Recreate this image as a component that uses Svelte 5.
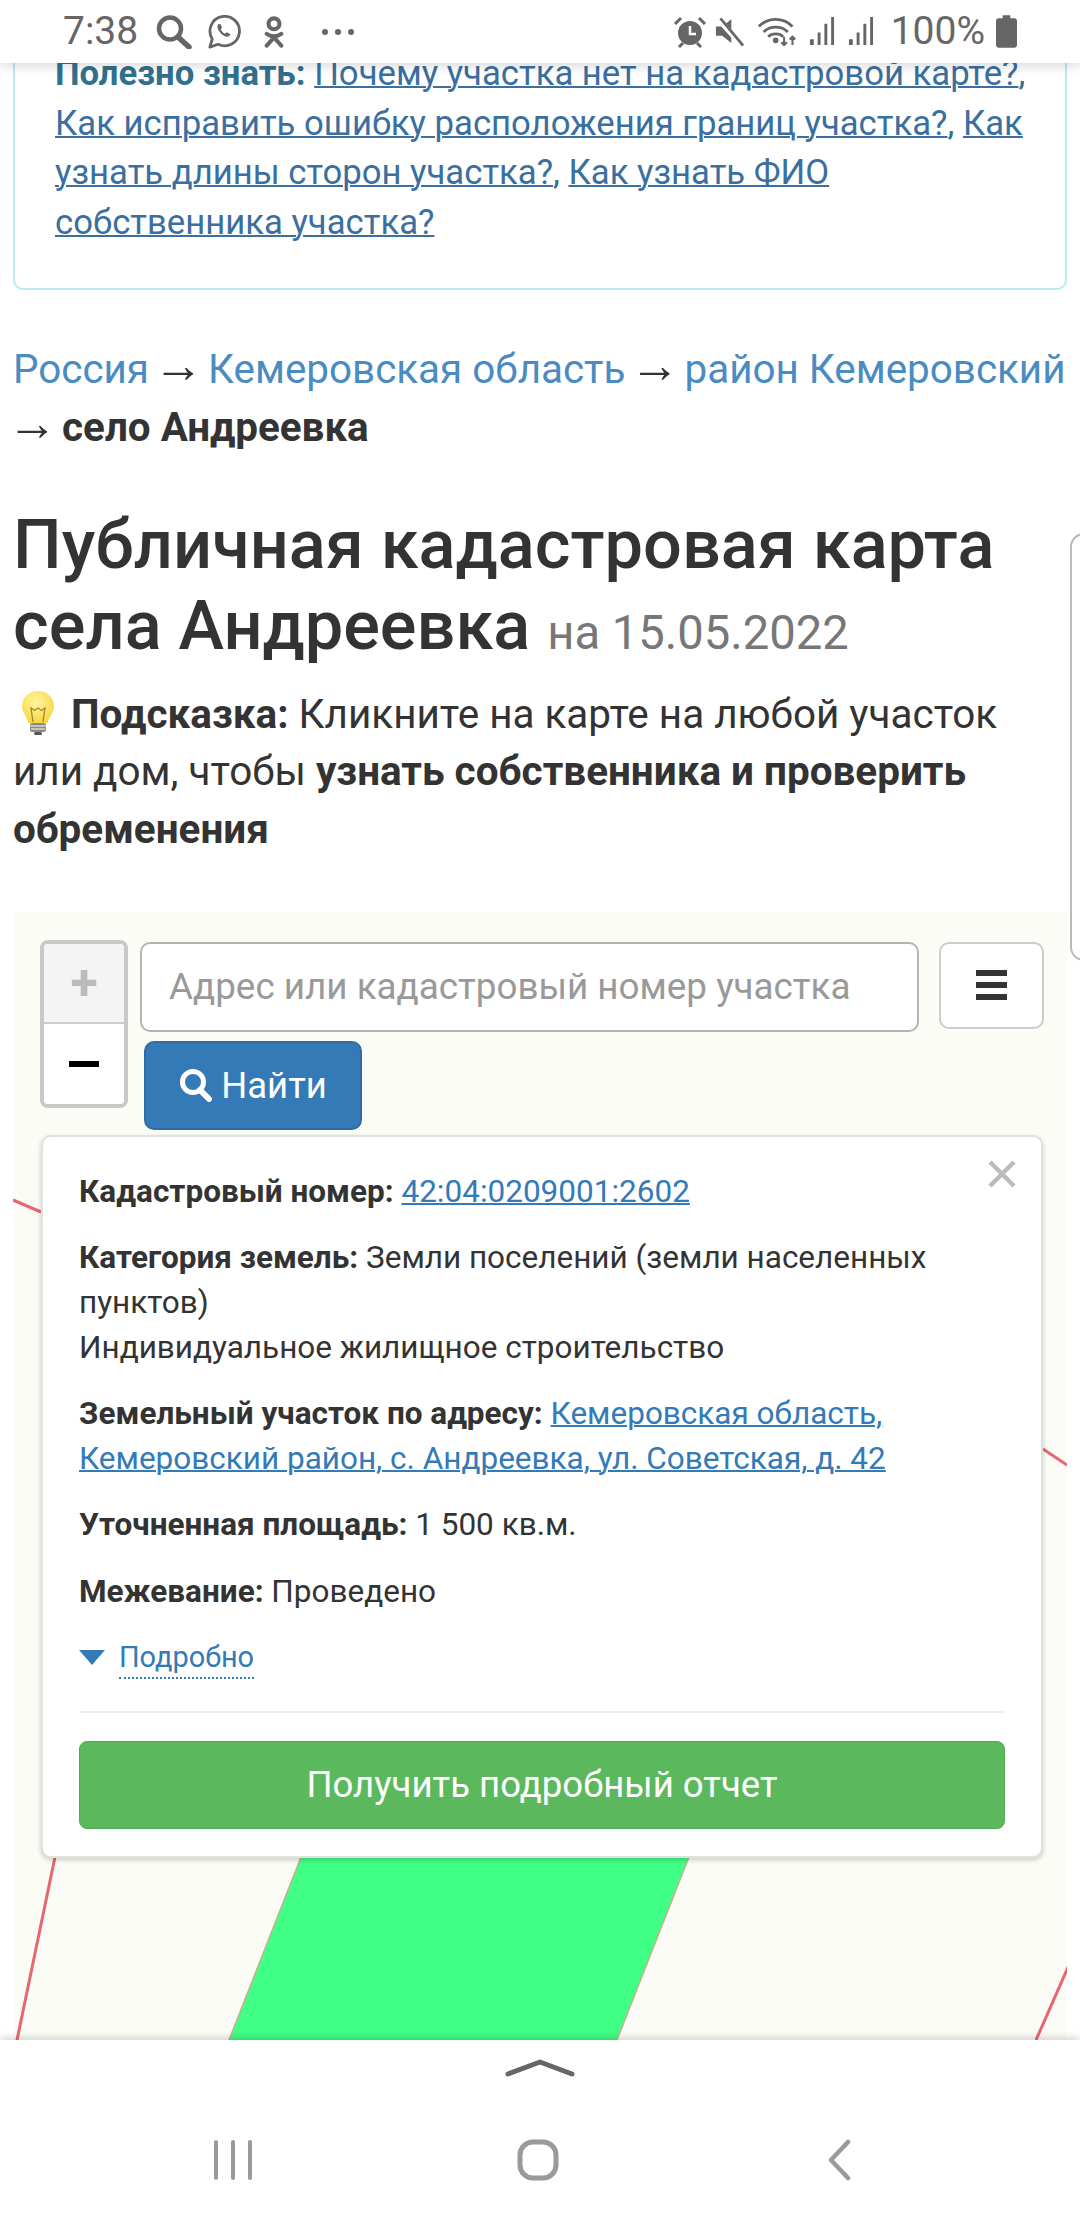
<script>
	const rows = [
		{ label: 'Уточненная площадь:', value: '1 500 кв.м.' },
		{ label: 'Межевание:', value: 'Проведено' }
	];
</script>

<div class="phone">
	<header class="status">
		<div class="status-left">
			<span class="time">7:38</span>
			<svg class="ic search-ic" width="36" height="34" viewBox="0 0 36 34">
				<circle cx="14" cy="13.500" r="11" fill="none" stroke="#666" stroke-width="4.500" />
				<path d="M22 22l11 10" stroke="#666" stroke-width="5.500" stroke-linecap="round" />
			</svg>
			<svg class="ic wa-ic" width="34" height="34" viewBox="0 0 36 36">
				<path d="M3 34l2.600-8.600A15.600 15.600 0 1 1 11.800 31z" fill="none" stroke="#666" stroke-width="3" stroke-linejoin="round" />
				<path d="M12.500 9.500c-2 1.500-2 4 0 7.200 2.200 3.500 5 5.600 8 6.300 2 .4 3.800-.8 4.300-2.600l-4-2.200-1.800 1.700c-2-.9-3.700-2.700-4.600-4.700l1.600-1.700-1.800-4z" fill="#666" />
			</svg>
			<svg class="ic ok-ic" width="20" height="32" viewBox="0 0 22 34">
				<circle cx="11" cy="8" r="6" fill="none" stroke="#666" stroke-width="4.500" />
				<path d="M3 19c5 3.500 11 3.500 16 0M11 22v2M3 32l8-9 8 9" fill="none" stroke="#666" stroke-width="4.500" stroke-linecap="round" />
			</svg>
			<span class="dots"><i></i><i></i><i></i></span>
		</div>
		<div class="status-right">
			<svg class="ic" width="34" height="32" viewBox="0 0 34 32">
				<circle cx="17" cy="17" r="12" fill="#666" />
				<path d="M17 10v8h6" fill="none" stroke="#fff" stroke-width="2.500" />
				<path d="M2 8l6-6M32 8l-6-6M6 31l4-4M28 31l-4-4" stroke="#666" stroke-width="3" />
			</svg>
			<svg class="ic mute-ic" width="29" height="32" viewBox="0 0 32 34">
				<path d="M1 11h7l10-8v26l-10-8H1z" fill="#666" />
				<path d="M3 2l26 29" stroke="#fff" stroke-width="6" />
				<path d="M6 2l25 30" stroke="#666" stroke-width="3" />
			</svg>
			<svg class="ic wifi-ic" width="41" height="32" viewBox="0 0 44 34">
				<path d="M1 11c10-10 26-10 36 0M6 17c7-7 19-7 26 0M11 22c4-4 12-4 16 0" fill="none" stroke="#666" stroke-width="3" />
				<circle cx="19" cy="26" r="3" fill="#666" />
				<path d="M28 22v9m-3-3l3 3 3-3M37 31v-9m-3 3l3-3 3 3" fill="none" stroke="#666" stroke-width="2.200" />
			</svg>
			<svg class="ic bars-ic" width="27" height="31" viewBox="0 0 28 32">
				<path d="M2 24h4v6H2zM10 17h3v13h-3zM17 8h3v22h-3zM24 1h3v29h-3z" fill="#666" />
			</svg>
			<svg class="ic bars2-ic" width="27" height="31" viewBox="0 0 28 32">
				<path d="M2 24h4v6H2zM10 17h3v13h-3zM17 8h3v22h-3zM24 1h3v29h-3z" fill="#666" />
			</svg>
			<span class="pct">100%</span>
			<svg class="ic batt-ic" width="21" height="33" viewBox="0 0 22 34">
				<path d="M7 0h8v3h4a3 3 0 0 1 3 3v25a3 3 0 0 1-3 3H3a3 3 0 0 1-3-3V6a3 3 0 0 1 3-3h4z" fill="#666" />
			</svg>
		</div>
	</header>

	<main class="page">
		<section class="alert">
			<strong>Полезно знать:</strong>
			<a href="#a">Почему участка нет на кадастровой карте?</a>,
			<a href="#a">Как исправить ошибку расположения границ участка?</a>,
			<a href="#a">Как узнать длины сторон участка?</a>,
			<a href="#a">Как узнать ФИО собственника участка?</a>
		</section>

		<nav class="crumbs">
			<a href="#a">Россия</a> <span class="arrow">→</span> <a href="#a">Кемеровская область</a> <span class="arrow">→</span> <a href="#a">район Кемеровский</a>
			<span class="arrow">→</span> <strong>село Андреевка</strong>
		</nav>

		<h1>Публичная кадастровая карта села Андреевка <small>на 15.05.2022</small></h1>

		<p class="hint">
			<svg class="bulb" width="34" height="46" viewBox="0 0 34 46">
				<defs>
					<radialGradient id="glass" cx="0.45" cy="0.35" r="0.7">
						<stop offset="0" stop-color="#fff6a0" />
						<stop offset="1" stop-color="#f7d43a" />
					</radialGradient>
				</defs>
				<path d="M17 1C7.500 1 1 8 1 16c0 7 5 10 6.500 17h19C28 26 33 23 33 16 33 8 26.500 1 17 1z" fill="url(#glass)" />
				<path d="M12 32l-2-14 3.500 2.500L17 18l3.500 2.500L24 18l-2 14" fill="none" stroke="#a08a30" stroke-width="1.300" />
				<rect x="9" y="33" width="16" height="9" rx="2" fill="#8a8a80" />
				<path d="M9 36h16M10 39h14" stroke="#d8d8d0" stroke-width="1.300" />
				<rect x="13" y="42" width="8" height="3" rx="1.500" fill="#555" />
			</svg>
			<strong>Подсказка:</strong> Кликните на карте на любой участок или дом, чтобы
			<strong>узнать собственника и проверить обременения</strong>
		</p>

		<div class="edge"></div>

		<section class="map">
			<svg class="parcels" width="1054" height="1128" viewBox="0 0 1054 1128">
				<path d="M288 945h388l-72 183H216z" fill="#40ff85" stroke="#c9b08c" stroke-width="1.500" />
				<path d="M0 288l28 12M1030 537l24 16M42 945L4 1128M1056 1053l-33 75" fill="none" stroke="#e8666e" stroke-width="3" />
			</svg>

			<div class="controls">
				<div class="left-col">
					<div class="zoom">
						<button class="zoom-in">+</button>
						<button class="zoom-out"><i></i></button>
					</div>
					<div class="layers"></div>
				</div>
				<div class="search">
					<div class="search-top">
						<input placeholder="Адрес или кадастровый номер участка" />
						<button class="menu" aria-label="Меню">
							<svg width="31" height="30" viewBox="0 0 31 30">
								<path d="M0 0h31v6H0zM0 12h31v6H0zM0 24h31v6H0z" fill="#333" />
							</svg>
						</button>
					</div>
					<button class="find">
						<svg width="34" height="34" viewBox="0 0 34 34">
							<circle cx="14" cy="14" r="10.500" fill="none" stroke="#fff" stroke-width="5" />
							<path d="M21 22l9 9" stroke="#fff" stroke-width="6" stroke-linecap="round" />
						</svg>
						Найти
					</button>
				</div>
			</div>

			<article class="popup">
				<svg class="close" width="30" height="30" viewBox="0 0 30 30">
					<path d="M3 3l24 24M27 3L3 27" stroke="#bbb" stroke-width="4.500" />
				</svg>
				<p><b>Кадастровый номер:</b> <a href="#a">42:04:0209001:2602</a></p>
				<p>
					<b>Категория земель:</b> Земли поселений (земли населенных пунктов)<br />
					Индивидуальное жилищное строительство
				</p>
				<p>
					<b>Земельный участок по адресу:</b>
					<a href="#a">Кемеровская область, Кемеровский район, с. Андреевка, ул. Советская, д. 42</a>
				</p>
				{#each rows as row}
					<p><b>{row.label}</b> {row.value}</p>
				{/each}
				<div class="more"><i></i><span>Подробно</span></div>
				<hr />
				<button class="report">Получить подробный отчет</button>
			</article>
		</section>
	</main>

	<footer class="nav">
		<svg class="chevron" width="70" height="20" viewBox="0 0 70 20">
			<path d="M3 16L35 4l32 12" fill="none" stroke="#666" stroke-width="5" stroke-linecap="round" stroke-linejoin="round" />
		</svg>
		<div class="nav-keys">
			<svg width="40" height="40" viewBox="0 0 40 40">
				<path d="M3 2v36M20 2v36M37 2v36" stroke="#9a9a9a" stroke-width="4" stroke-linecap="round" />
			</svg>
			<svg width="42" height="42" viewBox="0 0 42 42">
				<rect x="3" y="3" width="36" height="36" rx="13" fill="none" stroke="#9a9a9a" stroke-width="5" />
			</svg>
			<svg class="back" width="26" height="42" viewBox="0 0 26 42">
				<path d="M22 3L5 21l17 18" fill="none" stroke="#9a9a9a" stroke-width="4.500" stroke-linecap="round" stroke-linejoin="round" />
			</svg>
		</div>
	</footer>
</div>

<style>
	:global(body) {
		margin: 0;
		background: #fff;
	}

	.phone {
		width: 1080px;
		height: 2220px;
		display: flex;
		flex-direction: column;
		overflow: hidden;
		font-family: Roboto, 'Liberation Sans', sans-serif;
		color: #333;
		position: relative;
	}

	a {
		color: #337ab7;
		text-decoration-thickness: 2px;
	}

	/* status bar */
	.status {
		height: 63px;
		flex: none;
		background: #fff;
		box-shadow: 0 2px 12px rgba(0, 0, 0, 0.18);
		position: relative;
		z-index: 5;
		display: flex;
		justify-content: space-between;
		align-items: center;
		padding: 0 63px 0 63px;
		color: #666;
	}

	.status-left,
	.status-right {
		display: flex;
		align-items: center;
	}

	.time,
	.pct {
		font-size: 39px;
		line-height: 63px;
	}

	.ic {
		display: block;
		flex: none;
	}

	.search-ic {
		margin-left: 18px;
	}

	.wa-ic {
		margin-left: 15px;
	}

	.ok-ic {
		margin-left: 23px;
	}

	.mute-ic {
		margin-left: 8px;
	}

	.wifi-ic {
		margin-left: 14px;
	}

	.bars-ic {
		margin-left: 9px;
	}

	.bars2-ic {
		margin-left: 12px;
	}

	.pct {
		margin-left: 17px;
	}

	.batt-ic {
		margin-left: 11px;
	}

	.dots {
		display: flex;
		gap: 7px;
		margin-left: 38px;
	}

	.dots i {
		width: 6px;
		height: 6px;
		border-radius: 50%;
		background: #666;
	}

	/* scrolled page */
	.page {
		flex: 1;
		min-height: 0;
		overflow: hidden;
		position: relative;
	}

	.alert {
		margin: -39px 13px 0 13px;
		padding: 23px 20px 41px 40px;
		border: 2px solid #bce8f1;
		border-radius: 10px;
		font-size: 34.700px;
		line-height: 49.500px;
		color: #31708f;
		background: #fff;
	}

	.alert a {
		color: #3a6f9f;
	}

	.crumbs {
		margin: 51px 5px 0 13px;
		font-size: 40.400px;
		line-height: 57.500px;
		color: #333;
	}

	.crumbs a {
		color: #4a8cc2;
		text-decoration: none;
	}

	.arrow {
		font-family: 'Liberation Sans', sans-serif;
		font-size: 50px;
		line-height: 0;
		margin: 0 -5.500px;
		vertical-align: 1px;
	}

	h1 {
		margin: 49px 13px 0;
		font-size: 68.500px;
		line-height: 80.500px;
		font-weight: 500;
		color: #333;
	}

	h1 small {
		font-size: 47.200px;
		font-weight: 400;
		color: #777;
	}

	.hint {
		margin: 13px 13px 0;
		font-size: 40.450px;
		line-height: 57.300px;
		color: #333;
	}

	.bulb {
		vertical-align: -8px;
		margin: 0 6px 0 8px;
	}

	.edge {
		position: absolute;
		left: 1070px;
		top: 470px;
		width: 30px;
		height: 428px;
		border: 2px solid #bbb;
		border-radius: 14px;
		box-sizing: border-box;
		background: #fff;
	}

	/* map */
	.map {
		margin: 54px 13px 0;
		height: 1128px;
		background: #fcfcf7;
		position: relative;
		box-sizing: border-box;
		padding: 28px 23px 0 27px;
	}

	.parcels {
		position: absolute;
		left: 0;
		top: 0;
	}

	.controls {
		display: flex;
		gap: 12px;
		position: relative;
	}

	.left-col {
		flex: none;
		width: 88px;
	}

	.zoom {
		border: 4px solid #c8c8c4;
		border-radius: 8px;
		width: 88px;
		box-sizing: border-box;
		overflow: hidden;
	}

	.zoom button {
		display: flex;
		align-items: center;
		justify-content: center;
		width: 100%;
		height: 80px;
		border: 0;
		padding: 0;
		background: #fff;
		font-family: inherit;
		font-weight: 700;
		font-size: 50px;
		line-height: 1;
	}

	.zoom-in {
		color: #bbb;
		background: #f4f4f4 !important;
		border-bottom: 2px solid #ccc !important;
	}

	.zoom-out i {
		width: 30px;
		height: 6px;
		background: #000;
	}

	.layers {
		width: 70px;
		height: 60px;
		margin: 27px 0 0 5px;
		border: 2px solid #ddd;
		border-radius: 10px;
		background: #fff;
		box-sizing: border-box;
	}

	.search {
		flex: 1;
		min-width: 0;
		padding-top: 2px;
	}

	.search-top {
		display: flex;
		gap: 20px;
		align-items: flex-start;
	}

	input {
		flex: 1;
		min-width: 0;
		height: 90px;
		box-sizing: border-box;
		padding: 0 27px;
		border: 2px solid #b4b4b0;
		border-radius: 10px;
		font-family: inherit;
		font-size: 36.800px;
		background: #fff;
		color: #333;
	}

	input::placeholder {
		color: #999;
		opacity: 1;
	}

	.menu {
		width: 105px;
		height: 87px;
		flex: none;
		box-sizing: border-box;
		border: 2px solid #ccc;
		border-radius: 10px;
		background: #fff;
		padding: 0;
		display: flex;
		align-items: center;
		justify-content: center;
	}

	.find {
		margin: 9px 0 0 4px;
		height: 89px;
		width: 218px;
		display: flex;
		align-items: center;
		justify-content: center;
		gap: 8px;
		border: 2px solid #2e6da4;
		border-radius: 10px;
		background: #337ab7;
		color: #fff;
		font-family: inherit;
		font-size: 36.500px;
		padding: 0;
	}

	/* popup over the map */
	.popup {
		position: absolute;
		left: 28px;
		top: 223px;
		width: 1002px;
		height: 723px;
		box-sizing: border-box;
		padding: 33px 36px 0;
		background: #fff;
		border: 2px solid #e2e2dc;
		border-radius: 10px;
		box-shadow: 0 2px 5px rgba(0, 0, 0, 0.2);
		font-size: 31.500px;
		line-height: 44.600px;
	}

	.popup p {
		margin: 0 0 22px;
	}

	.popup b {
		font-weight: 700;
	}

	.close {
		position: absolute;
		right: 24px;
		top: 22px;
		display: block;
	}

	.more {
		display: flex;
		align-items: center;
		gap: 14px;
		font-size: 28.900px;
		line-height: 40px;
		color: #337ab7;
	}

	.more i {
		width: 0;
		height: 0;
		border-left: 13px solid transparent;
		border-right: 13px solid transparent;
		border-top: 15px solid #337ab7;
	}

	.more span {
		border-bottom: 2px dotted #337ab7;
	}

	hr {
		border: 0;
		border-top: 2px solid #eee;
		margin: 32px 0 28px;
	}

	.report {
		display: block;
		width: 100%;
		height: 88px;
		border: 1px solid #4cae4c;
		border-radius: 8px;
		background: #5cb85c;
		color: #fff;
		font-family: inherit;
		font-size: 36.600px;
		padding: 0;
	}

	/* android nav */
	.nav {
		height: 180px;
		flex: none;
		background: #fff;
		box-shadow: 0 -2px 8px rgba(0, 0, 0, 0.18);
		position: relative;
		z-index: 5;
		display: flex;
		flex-direction: column;
		align-items: center;
	}

	.chevron {
		margin-top: 18px;
		display: block;
	}

	.nav-keys {
		margin-top: 61px;
		align-self: flex-start;
		margin-left: 213px;
		display: flex;
		align-items: center;
		gap: 264px;
	}

	.back {
		margin-left: 3px;
	}
</style>
